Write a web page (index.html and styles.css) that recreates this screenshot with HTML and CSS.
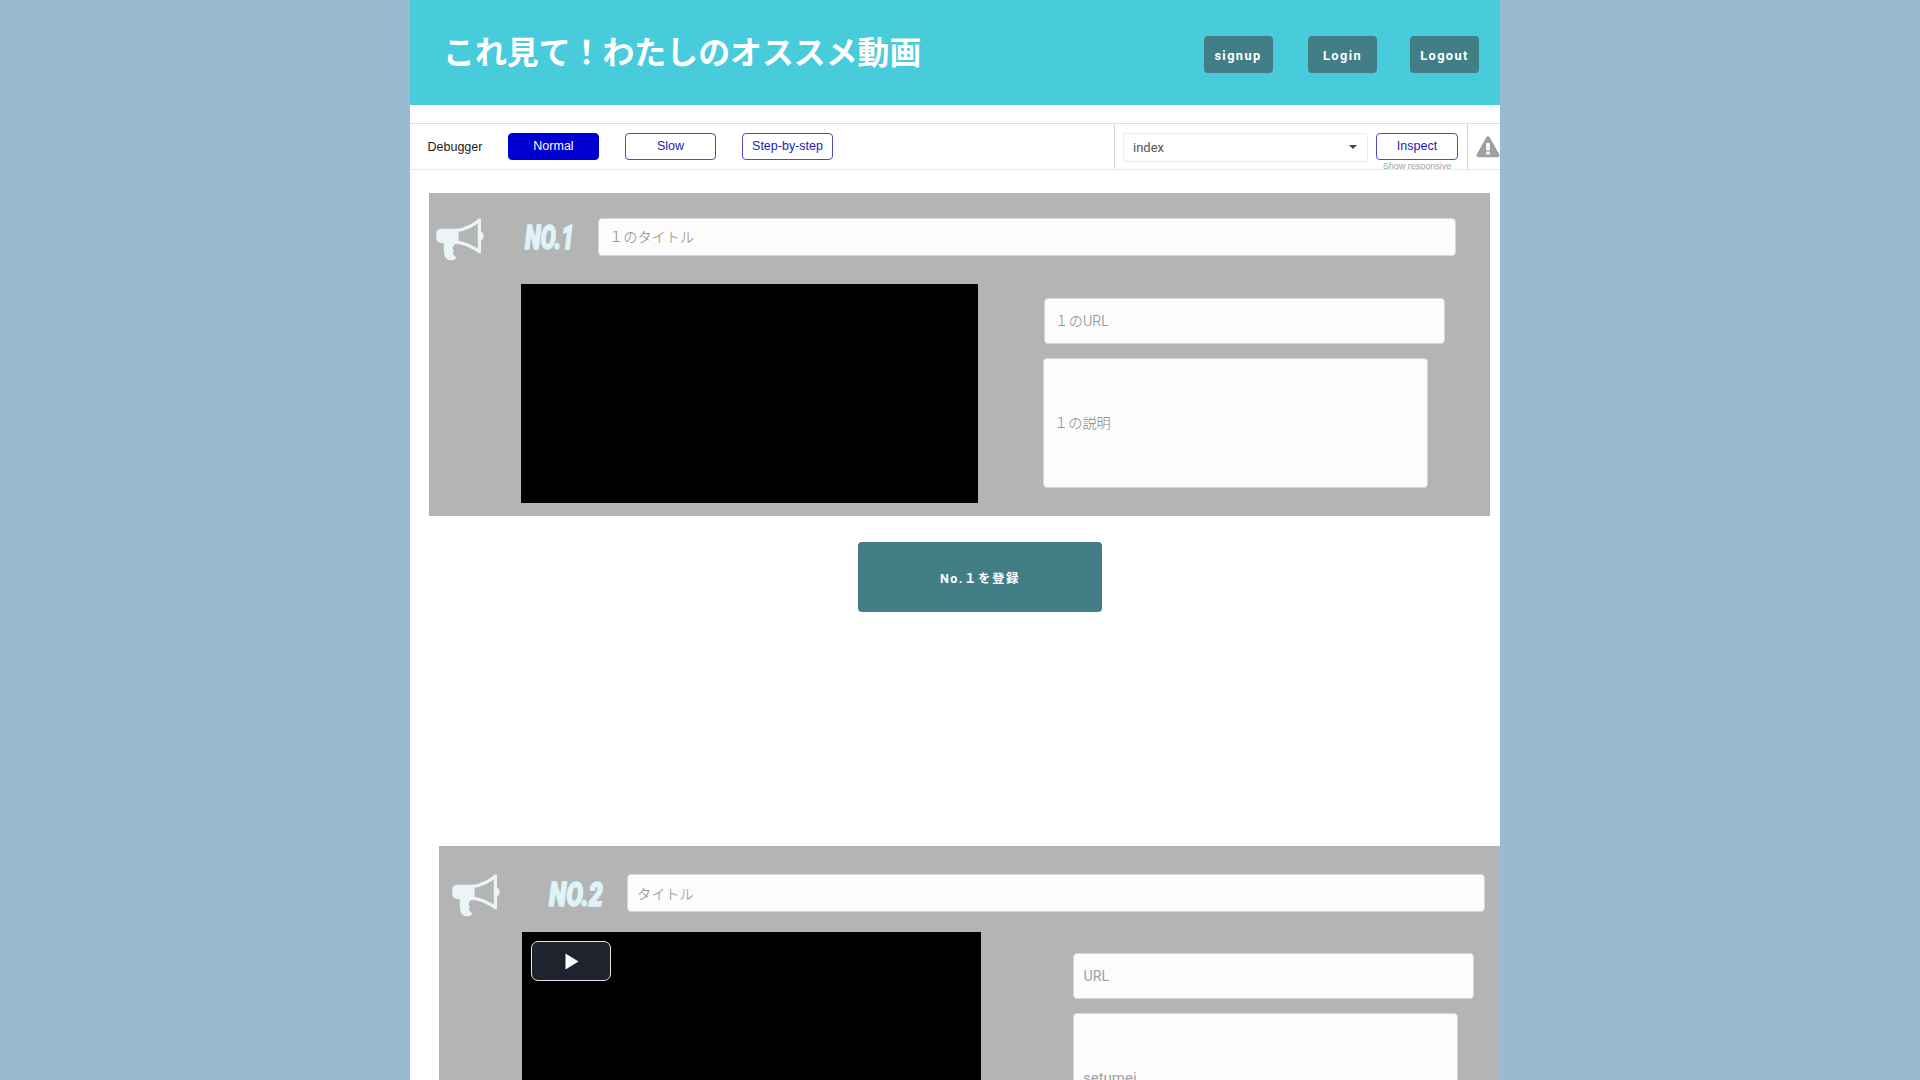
FILE: index.html
```html
<!DOCTYPE html>
<html lang="ja">
<head>
<meta charset="utf-8">
<title>これ見て！わたしのオススメ動画</title>
<link rel="stylesheet" href="styles.css">
</head>
<body>
<svg width="0" height="0" class="defs" aria-hidden="true">
  <symbol id="megaphone" viewBox="0 0 48 42" preserveAspectRatio="none">
    <path d="M6 10.500h15v15h-2q-3 2-2.500 5 1.500 2 0 4.500 1 2.500 3.700 3.500-2 3-6 2.700-4 0-5.200-3Q7.500 34 7.500 24.500H6Q.2 24.500.2 19V15Q.2 10.500 6 10.500z" fill="#ebf5f7"/>
    <path d="M20.500 12.200Q33 10.500 42.500 2V33Q33 25.500 20.500 23.500z" fill="none" stroke="#ebf5f7" stroke-width="3.200" stroke-linejoin="round"/>
    <path d="M43.500 13.800a4.500 4.500 0 0 1 0 8z" fill="#ebf5f7" stroke="#ebf5f7" stroke-width="1.500"/>
  </symbol>
</svg>
<main class="page">
  <header class="header">
    <h1 class="title">これ見て！わたしのオススメ動画</h1>
    <button class="account signup">signup</button>
    <button class="account login">Login</button>
    <button class="account">Logout</button>
  </header>
  <section class="debugger">
    <span class="debug-label">Debugger</span>
    <div class="speeds">
      <button class="debug-button active">Normal</button>
      <button class="debug-button">Slow</button>
      <button class="debug-button">Step-by-step</button>
    </div>
    <div class="inspector">
      <div class="select"><span>index</span><i class="caret"></i></div>
      <div class="inspect">
        <button class="debug-button">Inspect</button>
        <span class="responsive">Show responsive</span>
      </div>
    </div>
    <div class="issues">
      <svg width="24" height="22" viewBox="0 0 24 22"><path fill-rule="evenodd" d="M10.300 1.300Q12 -.8 13.700 1.300L23.300 18.500Q24.300 21 21.800 21.300H2.200Q-.3 21 .7 18.500zM10.200 7v7.200h3.600V7zM10.200 15.600v3h3.600v-3z" fill="#a0a0a0"/></svg>
    </div>
  </section>

  <section class="panel first">
    <div class="heading">
      <svg class="icon" width="49" height="43"><use href="#megaphone"/></svg>
      <svg class="rank" width="58" height="36"><text x="1" y="30" textLength="49" lengthAdjust="spacingAndGlyphs">NO.1</text></svg>
      <div class="field">１のタイトル</div>
    </div>
    <div class="content">
      <div class="video"></div>
      <div class="details">
        <div class="field url">１のURL</div>
        <div class="field description">１の説明</div>
      </div>
    </div>
  </section>

  <button class="register">No.１を登録</button>

  <section class="panel second">
    <div class="heading">
      <svg class="icon" width="49" height="43"><use href="#megaphone"/></svg>
      <svg class="rank" width="64" height="36"><text x="1" y="30" textLength="54" lengthAdjust="spacingAndGlyphs">NO.2</text></svg>
      <div class="field">タイトル</div>
    </div>
    <div class="content">
      <div class="video"><div class="play"><svg width="14" height="17" viewBox="0 0 14 17"><path d="M.5.5 13.500 8.500.5 16.500z" fill="#fff"/></svg></div></div>
      <div class="details">
        <div class="field url">URL</div>
        <div class="field description">setumei</div>
      </div>
    </div>
  </section>
</main>
</body>
</html>
```
FILE: styles.css
```css
* { box-sizing: border-box; }
html, body { height: 100%; overflow: hidden; }
body { margin: 0; background: #99bad1; font-family: Roboto, "Noto Sans CJK JP", sans-serif; }
button { font-family: inherit; padding: 0; border: 0; }
svg { display: block; flex: none; overflow: visible; }
.defs { position: absolute; }

.page {
  width: 1089.5px;
  height: 1080px;
  margin-left: 410px;
  background: #fff;
  overflow: hidden;
  display: flex;
  flex-direction: column;
}
.page > * { flex: none; }

.header {
  height: 105.4px;
  padding: 0 20.5px 32.400px 33px;
  background: #48ccdc;
  display: flex;
  align-items: flex-end;
}
.title {
  margin: 0 auto 0 0;
  padding-bottom: 3px;
  font: 700 31.9px/40px "Noto Sans CJK JP", sans-serif;
  color: #fff;
  white-space: nowrap;
}
.account {
  width: 69px;
  height: 37px;
  padding-top: 1px;
  border-radius: 4px;
  background: #427e85;
  color: #fff;
  font-size: 12.800px;
  font-weight: 700;
  letter-spacing: 1.4px;
}
.signup { margin-right: 35.500px; }
.login { margin-right: 33px; }

.debugger {
  height: 47px;
  margin-top: 17.600px;
  border-top: 1px solid #dedede;
  border-bottom: 1px solid #e8e8e8;
  display: flex;
  overflow: hidden;
  font-family: "Liberation Sans", sans-serif;
}
.debug-label { width: 98px; padding-left: 17.500px; font-size: 12.500px; line-height: 47px; color: #222; }
.speeds { display: flex; gap: 26px; padding-top: 9px; }
.debug-button {
  width: 91px;
  height: 27px;
  border: 1px solid #4a4acb;
  border-radius: 4px;
  background: #fff;
  color: #1c1cb4;
  font-size: 12.500px;
}
.debug-button.active { background: #0000d2; border-color: #0000d2; color: #fff; }
.inspector {
  width: 353px;
  margin-left: auto;
  padding: 9px 0 0 8px;
  border-left: 1px solid #d4d4d4;
  display: flex;
}
.select {
  width: 245px;
  height: 29px;
  margin-right: 8px;
  padding: 0 10px 0 9px;
  border: 1px solid #eaeaea;
  border-radius: 2px;
  display: flex;
  align-items: center;
  justify-content: space-between;
  font: 13px Roboto, sans-serif;
  color: #555;
}
.caret { border: 4px solid transparent; border-top-color: #444; border-bottom: 0; }
.inspect { width: 82px; text-align: center; }
.inspect .debug-button { width: 82px; display: block; }
.responsive { display: block; padding-top: 1px; font-size: 9px; line-height: 11px; color: #9aa6aa; white-space: nowrap; }
.issues { width: 32.500px; padding: 12px 0 0 8px; border-left: 1px solid #d4d4d4; overflow: hidden; }

.panel { width: 1061px; background: #b4b4b4; overflow: hidden; }
.first { height: 322.500px; margin: 23.500px 0 0 19px; padding: 24.500px 0 0 7px; }
.second { height: 234px; margin: 234px 0 0 29.300px; padding: 28px 0 0 12.700px; }
.heading { display: flex; height: 38px; }
.first .rank { margin: 1px 16px 0 39px; }
.second .rank { margin: 2px 15px 0 47px; }
.rank text {
  font: italic 900 33px "Roboto", sans-serif;
  fill: #def4f8;
  stroke: #def4f8;
  stroke-width: 1.500px;
}
.field {
  width: 858px;
  height: 38px;
  padding: 0 11px 1px 10px;
  border: 1px solid #d6d6d6;
  border-radius: 4px;
  background: #fcfcfc;
  display: flex;
  align-items: center;
  font-size: 14.200px;
  font-weight: 300;
  color: #868686;
}
.second .field { padding: 0 9px 1px; }
.content { display: flex; align-items: flex-start; }
.first .content { padding: 28px 0 0 85px; }
.second .content { padding: 20px 0 0 70px; }
.video { width: 457px; height: 219px; background: #000; }
.second .video { width: 459px; padding: 9px; }
.play {
  width: 80px;
  height: 40px;
  padding-left: 3px;
  border: 1px solid #e3e3e3;
  border-radius: 7px;
  background: #1f232d;
  display: flex;
  align-items: center;
  justify-content: center;
}
.details { display: grid; gap: 14px; margin-left: 65px; padding-top: 14px; }
.second .details { margin-left: 92px; padding-top: 21px; }
.details .url { width: 401px; height: 46px; margin-left: .5px; }
.second .details .url { padding-bottom: 0; font-weight: 400; color: #a0a0a0; }
.details .description { width: 385px; height: 130px; }
.second .details .description { padding-bottom: 0; font-size: 15px; font-weight: 400; color: #a0a0a0; }

.register {
  width: 244px;
  height: 70px;
  margin: 26.500px 0 0 448px;
  border-radius: 4px;
  background: #427e85;
  color: #fff;
  font-size: 12.500px;
  font-weight: 700;
  letter-spacing: 1.500px;
}
```
